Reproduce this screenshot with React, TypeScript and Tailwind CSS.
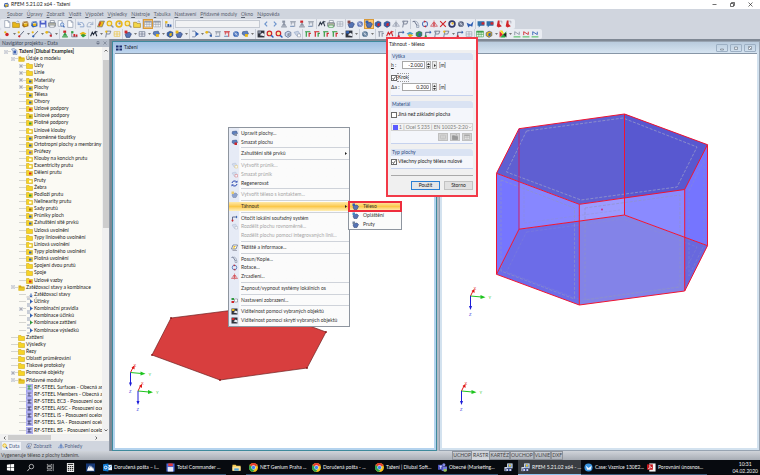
import React from 'react';
import clsx from 'clsx';

interface TreeItem {
  label: string;
  depth: number;
  icon?: string;
  mark?: string;
  sign?: string;
  bold?: boolean;
}

interface MenuEntry {
  label?: string;
  icon?: string;
  color?: string;
  disabled?: boolean;
  submenu?: boolean;
  active?: boolean;
}

interface Tool {
  g: string;
  a?: string;
  b?: string;
  on?: boolean;
}

const BLUE = '#2f5fb3';
const GOLD = '#e8b71a';
const RED = '#d0252b';
const GREEN = '#2f9a3e';
const GREY = '#8b93a3';

const MENUS = ['Soubor', 'Úpravy', 'Zobrazit', 'Vložit', 'Výpočet', 'Výsledky', 'Nástroje', 'Tabulka', 'Nastavení', 'Přídavné moduly', 'Okno', 'Nápověda'];

const TREE: TreeItem[] = [
  { label: 'Tažení [Dlubal Examples]', depth: 0, icon: 'model', sign: '-', bold: true },
  { label: 'Údaje o modelu', depth: 1, icon: 'open', sign: '-' },
  { label: 'Uzly', depth: 2, sign: '+' },
  { label: 'Linie', depth: 2, sign: '+' },
  { label: 'Materiály', depth: 2, sign: '+', mark: BLUE },
  { label: 'Plochy', depth: 2, sign: '+', mark: BLUE },
  { label: 'Tělesa', depth: 2, mark: BLUE },
  { label: 'Otvory', depth: 2, mark: BLUE },
  { label: 'Uzlové podpory', depth: 2, mark: RED },
  { label: 'Liniové podpory', depth: 2, mark: '#8a8a20' },
  { label: 'Plošné podpory', depth: 2, mark: GREEN },
  { label: 'Liniové klouby', depth: 2, mark: '#ffffff' },
  { label: 'Proměnné tloušťky', depth: 2, mark: BLUE },
  { label: 'Ortotropní plochy a membrány', depth: 2, mark: BLUE },
  { label: 'Průřezy', depth: 2, mark: '#6a62c8' },
  { label: 'Klouby na koncích prutu', depth: 2, mark: '#ffffff' },
  { label: 'Excentricity prutu', depth: 2, mark: '#ffffff' },
  { label: 'Dělení prutu', depth: 2, mark: RED },
  { label: 'Pruty', depth: 2, mark: '#ffffff' },
  { label: 'Žebra', depth: 2 },
  { label: 'Podloží prutu', depth: 2, mark: GREEN },
  { label: 'Nelinearity prutu', depth: 2, mark: '#ffffff' },
  { label: 'Sady prutů', depth: 2, mark: '#a06a10' },
  { label: 'Průniky ploch', depth: 2, mark: BLUE },
  { label: 'Zahuštění sítě prvků', depth: 2, mark: BLUE },
  { label: 'Uzlová uvolnění', depth: 2 },
  { label: 'Typy liniového uvolnění', depth: 2 },
  { label: 'Liniová uvolnění', depth: 2, mark: '#ffffff' },
  { label: 'Typy plošného uvolnění', depth: 2, mark: BLUE },
  { label: 'Plošná uvolnění', depth: 2, mark: BLUE },
  { label: 'Spojení dvou prutů', depth: 2 },
  { label: 'Spoje', depth: 2 },
  { label: 'Uzlové vazby', depth: 2, mark: RED },
  { label: 'Zatěžovací stavy a kombinace', depth: 1, icon: 'open', sign: '-' },
  { label: 'Zatěžovací stavy', depth: 2, icon: 'load' },
  { label: 'Účinky', depth: 2, icon: 'combo', mark: BLUE },
  { label: 'Kombinační pravidla', depth: 2, icon: 'combo', mark: BLUE, sign: '+' },
  { label: 'Kombinace účinků', depth: 2, icon: 'combo', mark: BLUE },
  { label: 'Kombinace zatížení', depth: 2, icon: 'combo', mark: GREEN },
  { label: 'Kombinace výsledků', depth: 2, icon: 'combo', mark: BLUE },
  { label: 'Zatížení', depth: 1 },
  { label: 'Výsledky', depth: 1 },
  { label: 'Řezy', depth: 1 },
  { label: 'Oblasti průměrování', depth: 1 },
  { label: 'Tiskové protokoly', depth: 1 },
  { label: 'Pomocné objekty', depth: 1, sign: '+' },
  { label: 'Přídavné moduly', depth: 1, icon: 'open', sign: '-' },
  { label: 'RF-STEEL Surfaces - Obecná ana', depth: 2, icon: 'module', mark: GREEN },
  { label: 'RF-STEEL Members - Obecná an', depth: 2, icon: 'module', mark: '#555588' },
  { label: 'RF-STEEL EC3 - Posouzení ocelov', depth: 2, icon: 'module', mark: '#333366' },
  { label: 'RF-STEEL AISC - Posouzení ocelo', depth: 2, icon: 'module', mark: '#333366' },
  { label: 'RF-STEEL IS - Posouzení ocelový', depth: 2, icon: 'module', mark: '#333366' },
  { label: 'RF-STEEL SIA - Posouzení ocelov', depth: 2, icon: 'module', mark: '#333366' },
  { label: 'RF-STEEL BS - Posouzení ocelový', depth: 2, icon: 'module', mark: '#333366' },
];

const CONTEXT_MENU: MenuEntry[] = [
  { label: 'Upravit plochy...', icon: 'surface', color: GREY },
  { label: 'Smazat plochu', icon: 'surface', color: RED },
  {},
  { label: 'Zahuštění sítě prvků', submenu: true },
  {},
  { label: 'Vytvořit průnik...', icon: 'cross', color: GOLD, disabled: true },
  { label: 'Smazat průnik', icon: 'cross', color: RED, disabled: true },
  { label: 'Regenerovat', icon: 'refresh', color: '#2b47b0' },
  {},
  { label: 'Vytvořit těleso s kontaktem...', icon: 'solid', color: GOLD, disabled: true },
  {},
  { label: 'Táhnout', submenu: true, active: true },
  {},
  { label: 'Otočit lokální souřadný systém', icon: 'axis', color: RED },
  { label: 'Rozdělit plochu rovnoměrně...', icon: 'cross', color: GREY, disabled: true },
  { label: 'Rozdělit plochu pomocí integrovaných linií...', disabled: true },
  {},
  { label: 'Těžiště a informace...', icon: 'info', color: GOLD },
  {},
  { label: 'Posun/Kopie...', icon: 'move', color: GREY },
  { label: 'Rotace...', icon: 'rotate', color: RED },
  { label: 'Zrcadlení...', icon: 'mirror', color: RED },
  {},
  { label: 'Zapnout/vypnout systémy lokálních os' },
  {},
  { label: 'Nastavení zobrazení...', icon: 'display', color: GREEN },
  {},
  { label: 'Viditelnost pomocí vybraných objektů', icon: 'visible', color: GOLD },
  { label: 'Viditelnost pomocí skrytí vybraných objektů', icon: 'visible', color: RED },
];

const SUBMENU = [
  { label: 'Těleso', color: BLUE },
  { label: 'Opláštění', color: '#3f86c4' },
  { label: 'Pruty', color: '#6d7f9c' },
];

const FILE_TOOLS: Tool[][] = [
  [{ g: 'page' }, { g: 'folder', a: GOLD }, { g: 'box', a: '#a36d1c', b: GOLD }, { g: 'box', a: BLUE, b: GOLD }, { g: 'save' }, { g: 'print' }, { g: 'pageZoom' }, { g: 'page' }],
  [{ g: 'undo' }, { g: 'redo' }],
  [{ g: 'parallel', a: GOLD, b: RED }, { g: 'zoom', a: GOLD }, { g: 'ring', a: GOLD, b: GREY }, { g: 'zoom', a: GOLD, b: GREY }, { g: 'folder', a: '#f2d64a' }],
  [{ g: 'table', on: true }, { g: 'table', a: GREY }],
  [{ g: 'nodes', a: GOLD, b: BLUE }],
];

const VIEW_TOOLS: Tool[][] = [
  [{ g: 'prev' }, { g: 'next' }, { g: 'support', a: GREY }, { g: 'beam', a: GREY }, { g: 'support', a: GREY, b: RED }, { g: 'beam', a: GREY }],
  [{ g: 'wave', a: '#333c4c' }, { g: 'print', a: GREEN }, { g: 'frame', a: GREY }],
  [{ g: 'solid', a: '#8a4a4a' }, { g: 'gear', a: '#5a6fb5' }, { g: 'solid', a: BLUE, on: true }, { g: 'cube', a: BLUE, b: RED }, { g: 'cube', a: BLUE, b: RED }, { g: 'mirror', a: GREY }, { g: 'flag', a: GREY }],
  [{ g: 'move' }, { g: 'rotate', a: RED }, { g: 'mirror', a: RED }, { g: 'xcross', a: RED }, { g: 'ring', a: '#333c6c', b: GOLD }, { g: 'gear', a: '#4a5470' }, { g: 'arrowUp', a: BLUE }],
  [{ g: 'chat', a: BLUE, b: RED }, { g: 'chat', a: BLUE, b: RED }, { g: 'pin', a: RED }, { g: 'pin', a: RED }],
];

const MODEL_TOOLS: Tool[][] = [
  [{ g: 'dot', a: RED }, { g: 'v' }, { g: 'line', a: GOLD, b: RED }, { g: 'v' }, { g: 'line', a: GOLD, b: BLUE }, { g: 'v' }, { g: 'arc', a: GOLD, b: RED }, { g: 'v' }],
  [{ g: 'support', a: GREEN, b: RED }, { g: 'nodes', a: GREEN, b: RED }, { g: 'layer', a: GREEN, b: GOLD }],
  [{ g: 'wave', a: '#222b3c' }, { g: 'v' }, { g: 'flag', a: GOLD }, { g: 'frame', a: GOLD }],
  [{ g: 'solid', a: RED }, { g: 'v' }, { g: 'frame', a: '#4a5470' }, { g: 'v' }, { g: 'surface', a: GOLD }, { g: 'v' }, { g: 'cube', a: BLUE, b: GOLD }, { g: 'solid', a: GOLD }, { g: 'v' }],
  [{ g: 'combo', a: BLUE }, { g: 'v' }, { g: 'arc', a: GOLD, b: BLUE }, { g: 'beam', a: GREY }, { g: 'beam', a: RED }, { g: 'gear', a: BLUE }, { g: 'surface', a: GOLD }, { g: 'v' }],
  [{ g: 'visible', a: GREY }, { g: 'zoom', a: RED, b: BLUE }, { g: 'zoom', a: RED, b: BLUE }, { g: 'cube', a: '#c9d6ee', b: GREY }, { g: 'cross', a: GREY }],
  [{ g: 'axes', a: GREEN, b: RED }, { g: 'axes', a: RED, b: GREEN }, { g: 'axes', a: GREEN, b: RED }, { g: 'axes', a: GREEN, b: RED }, { g: 'v' }, { g: 'visible', a: BLUE }, { g: 'v' }],
  [{ g: 'gear', a: '#4a6a8a' }, { g: 'v' }],
  [{ g: 'axes', a: GREY, b: GREY }, { g: 'wave', a: RED }],
  [{ g: 'axis', a: RED }, { g: 'layer', a: GOLD, b: '#4aa0c8' }, { g: 'cube', a: GREEN, b: BLUE }, { g: 'axis', a: GREEN }, { g: 'flag', a: GREY }, { g: 'flag', a: GOLD }, { g: 'v' }, { g: 'axis', a: RED }, { g: 'frame', a: GREY }],
  [{ g: 'table', a: GREEN }, { g: 'cube', a: GOLD, b: BLUE }, { g: 'v' }, { g: 'rainbow' }, { g: 'v' }, { g: 'ground', a: GREY }, { g: 'ground', a: RED }, { g: 'ground', a: BLUE }],
];

const STATUS = ['UCHOP', 'RASTR', 'KARTÉZ', 'OUCHOP', 'VLINIE', 'DXF'];

// All glyphs are drawn on a 14x14 grid
const shapes = (g: string, a: string, b: string): React.ReactNode => {
  switch (g) {
    case 'page':
      return <path d="M3 1h6l3 3v9H3z M9 1v3h3" fill="#fff" stroke="#7a869c" />;
    case 'pageZoom':
      return <><path d="M2 1h7v10H2z" fill="#fff" stroke="#7a869c" /><circle cx="9" cy="8" r="3" fill="#cfe0f2" stroke={BLUE} /><path d="M11 10l2 3" stroke={BLUE} strokeWidth="2" /></>;
    case 'folder':
      return <><path d="M1 4h5l1 2h6v7H1z" fill={a} stroke="#a07a10" /><path d="M8 3c2-2 4-1 4 1" fill="none" stroke="#4b6fae" /></>;
    case 'box':
      return <><path d="M3 3l8-1 2 3v6l-8 2-3-3z" fill={a} /><circle cx="8" cy="8" r="3" fill={b} /><path d="M3 3l2 3 8-1" fill="none" stroke="#fff" /></>;
    case 'save':
      return <><path d="M1 1h12v12H1z" fill="#4c5ec8" /><path d="M4 1h6v4H4z M3 8h8v5H3z" fill="#f0f3fb" /></>;
    case 'print':
      return <><path d="M4 1h7v4H4z" fill="#fff" stroke="#6a7488" /><path d="M1 5h12v6H1z" fill="#b9b6a6" stroke="#5a6478" /><path d="M3 9h8v4H3z" fill="#eee" stroke={a} /></>;
    case 'undo':
      return <path d="M2 3v5h5 M2 8c3-5 9-5 10 1v3H5" fill="none" stroke="#7f9cc8" strokeWidth="1.5" />;
    case 'redo':
      return <path d="M12 3v5H7 M12 8C9 3 3 3 2 9v3h7" fill="none" stroke="#9aabc6" strokeWidth="1.5" />;
    case 'parallel':
      return <><path d="M5 2h8l-4 10H1z" fill={a} stroke="#555" /><path d="M6 4l-2 6" stroke={b} strokeWidth="2" /></>;
    case 'zoom':
      return <><circle cx="6" cy="6" r="4" fill="#f6e9a8" stroke={a} strokeWidth="2" /><path d="M9 9l4 4" stroke={b} strokeWidth="2.5" /></>;
    case 'ring':
      return <><circle cx="7" cy="7" r="5" fill="#eef" stroke={a} strokeWidth="3" /><circle cx="8" cy="6" r="2" fill={b} /></>;
    case 'table':
      return <><path d="M1 2h12v10H1z" fill="#fff" stroke={a} /><path d="M1 5h12M1 8h12M5 2v10M9 2v10" stroke={a} /><path d="M1 2h12v2H1z" fill={a} /></>;
    case 'nodes':
      return <><path d="M2 2h4v4H2z" fill={a} /><path d="M6 7h3v5H6z M10 8h3v4h-3z" fill={b} /><path d="M3 6v6h10" fill="none" stroke="#556" /></>;
    case 'prev':
      return <path d="M9 3L5 7l4 4" fill="none" stroke="#6d94cc" strokeWidth="2" />;
    case 'next':
      return <path d="M5 3l4 4-4 4" fill="none" stroke="#6d94cc" strokeWidth="2" />;
    case 'support':
      return <><path d="M4 1h5v4H4z" fill={b} /><path d="M7 4l4 6H3z" fill={a} /><path d="M2 12h10" stroke={a} strokeWidth="2" /></>;
    case 'beam':
      return <><path d="M2 3h10M4 3v5M10 3v9M7 3v3" stroke={a} strokeWidth="1.5" /><path d="M2 11h7" stroke="#5577aa" strokeWidth="1.5" /></>;
    case 'wave':
      return <path d="M1 11l3-7 2 4 3-5 3 8M9 3h4" fill="none" stroke={a} strokeWidth="1.8" />;
    case 'frame':
      return <path d="M2 3h10v8H2z M2 7h10 M7 3v8" fill="#eef1f7" stroke={a} />;
    case 'solid':
      return <><path d="M4 5l6-1 3 3-3 6H4L2 8z" fill="#5573b4" stroke="#2b3e6e" /><path d="M1 1h5v5H1z" fill={a} /></>;
    case 'gear':
      return <><circle cx="7" cy="7" r="5" fill={a} /><path d="M3 7h8M7 3v8M4 4l6 6" stroke="#e6ecf7" /></>;
    case 'cube':
      return <><path d="M2 5l5-3 5 2v6l-5 3-5-3z" fill={a} stroke="#33466e" /><path d="M6 6l4-1v5l-4 1z" fill={b} /></>;
    case 'mirror':
      return <path d="M7 1v12 M6 4v7H1z M8 4v7h5z" fill="#dfe4ee" stroke={a} />;
    case 'flag':
      return <><path d="M3 13L5 2h7l-2 5H5" fill="none" stroke="#59647c" strokeWidth="1.3" /><circle cx="4" cy="3" r="2" fill={a} /></>;
    case 'move':
      return <><path d="M1 3l3-1 5 8" fill="none" stroke="#4a5470" strokeWidth="1.4" /><path d="M5 2c4 0 6 3 6 6M8 9h4v4H8z" fill="#dfe4ee" stroke="#7a869c" /></>;
    case 'rotate':
      return <><circle cx="7" cy="7" r="4.5" fill="none" stroke="#5577bb" strokeWidth="1.8" /><path d="M5 1l4 1-3 3z M9 13l-4-1 3-3z" fill={a} /></>;
    case 'xcross':
      return <path d="M2 2l10 10M12 2L2 12" stroke={a} strokeWidth="2" />;
    case 'arrowUp':
      return <path d="M1 5l7 3 5-6-2 10-4-2-3 3z" fill={a} />;
    case 'chat':
      return <><path d="M1 2h12v8H6l-3 3v-3H1z" fill="#2f6fa8" /><path d="M8 4h5v4H8z" fill={b} /></>;
    case 'pin':
      return <><path d="M5 1h3v6l4 4-6 2-3-2z" fill={a} /><path d="M9 2h3v4" fill="none" stroke="#889" /></>;
    case 'dot':
      return <><circle cx="7" cy="8" r="3" fill={a} /><circle cx="4" cy="4" r="2" fill={GOLD} /></>;
    case 'line':
      return <><path d="M3 12L12 2" stroke="#555f78" strokeWidth="1.6" /><circle cx="3" cy="4" r="2" fill={a} /><circle cx="4" cy="11" r="2" fill={b} /></>;
    case 'arc':
      return <><path d="M3 4c6-2 9 2 8 8" fill="none" stroke="#555f78" strokeWidth="1.6" /><circle cx="3" cy="4" r="2.4" fill={a} /><circle cx="10" cy="10" r="2" fill={b} /></>;
    case 'layer':
      return <><path d="M1 6l6-3 6 3-6 5z" fill={b} /><path d="M3 9l4-2 6 2-6 4z" fill={a} /></>;
    case 'surface':
      return <><path d="M3 3l8-1 2 5-7 3-4-3z" fill="#5b7fbe" stroke="#31497c" /><path d="M7 7h5v5H7z" fill={a} /></>;
    case 'cross':
      return <><path d="M2 4l7-2 3 5-5 4z" fill="#c9d3e4" stroke="#8ba0c4" /><path d="M8 7h5v5H8z" fill="#fff" stroke={a} /></>;
    case 'refresh':
      return <><path d="M2 6a5 5 0 0 1 9-2M12 8a5 5 0 0 1-9 2" fill="none" stroke={a} strokeWidth="2" /><path d="M8 5h5V1z M6 9H1v4z" fill={a} /></>;
    case 'axis':
      return <><path d="M3 13V4h8" fill="none" stroke="#44527a" strokeWidth="1.6" /><path d="M10 1l3 3-3 3z" fill={BLUE} /><circle cx="3" cy="11" r="2" fill={a} /></>;
    case 'info':
      return <><path d="M4 2h9l-3 8H1z" fill="#fff" stroke="#44506c" strokeWidth="1.2" /><path d="M5 5h4M4 8h4" stroke={a} strokeWidth="2" /><path d="M3 13h9" stroke="#667" /></>;
    case 'display':
      return <><path d="M1 2h5v4H1z" fill={a} /><path d="M1 8h5v4H1z" fill={RED} /><path d="M7 4h6v6H7z" fill="#fff" stroke="#667" /></>;
    case 'visible':
      return <><path d="M1 1h12v12H1z" fill="#30343e" /><path d="M2 2h5v4H2z" fill={a} /><path d="M5 9l4-4 4 2v4z" fill="#e8ebf2" /></>;
    case 'axes':
      return <><path d="M2 3h9M4 3v9" stroke={a} strokeWidth="2" /><path d="M8 6h4M9 6v6" stroke={b} strokeWidth="2" /></>;
    case 'rainbow':
      return <><path d="M1 2l6 6-6 5z" fill="#e8282c" /><path d="M1 1h5l3 6-2 1z" fill="#f5d91c" /><path d="M13 2L7 8l-5 5h9z" fill="#28a83c" /><path d="M8 8l5-3v8z" fill="#222" /></>;
    case 'ground':
      return <><path d="M1 11h12v2H1z" fill="#5cc36c" /><path d="M3 9V3l8 5V3" fill="none" stroke={a} strokeWidth="1.5" /></>;
    case 'combo':
      return <><path d="M2 2h5c3 0 3 10 0 10H2" fill="none" stroke="#5c7098" strokeWidth="1.3" /><path d="M8 3l6 4-6 4z" fill={a} /></>;
    case 'load':
      return <><path d="M1 12h12" stroke="#778" /><path d="M10 5v7M8 9l2 3 2-3" stroke={BLUE} strokeWidth="2" fill="none" /></>;
    case 'module':
      return <><path d="M0 0h14v14H0z" fill="#c4c4f6" stroke="#8c8ce8" strokeWidth="1.5" /><path d="M3 4h8M3 10h8M6 4v6" stroke={a} strokeWidth="2" /></>;
    case 'model':
      return <><path d="M1 2l5-1 6 4v8H4V7z" fill="#dfe7f4" stroke="#5673ab" /><path d="M5 5h5v6H5z" fill="#3b5fae" /></>;
    case 'open':
      return <><path d="M1 3h5l1 2h6v8H1z" fill="#d4a80c" /><path d="M3 7h11l-2 6H1z" fill="#e6c62a" /></>;
    default:
      return <><path d="M1 3h5l1 2h6v8H1z" fill="#f6d327" stroke="#caa008" /><path d="M6 7h5v4H6z" fill={a} /></>;
  }
};

const Glyph = ({ g, a = GREY, b = GREY, className = 'size-2' }: { g: string; a?: string; b?: string; className?: string }) => (
  <svg viewBox="0 0 14 14" className={clsx('shrink-0', className)} aria-hidden="true">{shapes(g, a, b)}</svg>
);

const ToolGroups = ({ groups }: { groups: Tool[][] }) => (
  <>
    {groups.map((group, i) => (
      <div key={i} className="flex h-full items-center gap-px border-r border-[#c9ced8] px-px last:border-r-0">
        {group.map((t, j) =>
          t.g === 'v' ? (
            <button key={j} aria-label="Další" className="flex w-1 justify-center">
              <svg viewBox="0 0 6 4" className="w-[3px]"><path d="M0 0h6L3 4z" fill="#777" /></svg>
            </button>
          ) : (
            <button key={j} aria-label={t.g} className={clsx('flex size-2 items-center justify-center', t.on && 'bg-[#ffc66b] outline outline-[#d99a3a]')}>
              <Glyph g={t.g} a={t.a} b={t.b} />
            </button>
          )
        )}
      </div>
    ))}
  </>
);

const TreeRow = ({ item }: { item: TreeItem }) => {
  const g = item.icon || 'folder-closed';
  return (
    <li className={clsx('flex min-h-0 flex-1 items-center whitespace-nowrap', item.depth === 0 && 'pl-[4px]', item.depth === 1 && 'pl-[11px]', item.depth === 2 && 'pl-[19px]')}>
      <span className="flex w-[7px] shrink-0 items-center">
        {item.sign && (
          <svg viewBox="0 0 8 8" className="size-1">
            <path d="M0.5 0.5h7v7h-7z" fill="#fff" stroke="#9aa3b4" />
            <path d={item.sign === '+' ? 'M2 4h4M4 2v4' : 'M2 4h4'} stroke="#445" />
          </svg>
        )}
        <span className="h-px flex-1 bg-[#d5d5d0]" />
      </span>
      <Glyph g={g} a={item.mark || '#f6d327'} className="size-[7px]" />
      <span className={clsx('pl-px', item.bold && 'pl-[2px] font-bold')}>{item.label}</span>
    </li>
  );
};

const Navigator = () => (
  <aside className="flex w-[110px] shrink-0 flex-col border-r border-[#8d96a3] bg-[#d0d5de]">
    <header className="flex h-2 items-center justify-between bg-[#b4bcc9] px-[2px] text-[#3c4656]">
      <span>Navigátor projektu - Data</span>
      <span className="flex gap-[3px] text-[#5d6778]">
        <button aria-label="Připnout">
          <svg viewBox="0 0 8 8" className="size-1"><path d="M2 1h4v4H2z M1 5h6M4 5v3" fill="none" stroke="currentColor" /></svg>
        </button>
        <button aria-label="Zavřít panel">
          <svg viewBox="0 0 8 8" className="size-1"><path d="M1 1l6 6M7 1L1 7" stroke="currentColor" /></svg>
        </button>
      </span>
    </header>
    <div className="flex min-h-0 flex-1 bg-[#fbfaf4]">
      <ul className="flex min-w-0 flex-1 flex-col overflow-hidden pt-px">
        {TREE.map((item, i) => <TreeRow key={i} item={item} />)}
      </ul>
      <div className="flex w-[7px] shrink-0 flex-col items-center bg-[#f0f0f0] py-[2px]">
        <svg viewBox="0 0 8 6" className="w-1"><path d="M1 5l3-3 3 3" fill="none" stroke="#333" strokeWidth="1.4" /></svg>
        <div className="mt-2 h-[168px] w-[6px] bg-[#cdcdcd]" />
        <svg viewBox="0 0 8 6" className="mt-auto w-1"><path d="M1 1l3 3 3-3" fill="none" stroke="#333" strokeWidth="1.4" /></svg>
      </div>
    </div>
    <div className="flex h-[7px] items-center gap-[2px] bg-[#f0f0f0] px-[3px]">
      <svg viewBox="0 0 6 8" className="h-1"><path d="M5 1L2 4l3 3" fill="none" stroke="#333" strokeWidth="1.4" /></svg>
      <div className="h-[5px] w-[43px] bg-[#cdcdcd]" />
      <svg viewBox="0 0 6 8" className="mr-2 ml-auto h-1"><path d="M1 1l3 3-3 3" fill="none" stroke="#333" strokeWidth="1.4" /></svg>
    </div>
    <nav className="flex h-[10px] items-center gap-[3px] pl-[2px] text-[#4f5f85]">
      <button className="flex h-2 items-center gap-px bg-[#eef1f6] pr-[2px]"><Glyph g="zoom" a={GOLD} b={BLUE} className="size-[6px]" />Data</button>
      <button className="flex items-center gap-px pl-[2px]"><Glyph g="info" a={BLUE} className="size-[6px]" />Zobrazit</button>
      <button className="flex items-center gap-px pl-[3px]"><Glyph g="mirror" a={BLUE} className="size-[6px]" />Pohledy</button>
    </nav>
  </aside>
);

const Axes = ({ x, y }: { x: number; y: number }) => (
  <g transform={`translate(${x} ${y})`} fontSize="4" fontFamily="Liberation Sans, sans-serif">
    <path d="M0 0L3 -6" stroke="#e01818" />
    <path d="M1 -5L4 -7V-3z" fill="#e01818" />
    <text x="3" y="-6" fill="#e01818">X</text>
    <path d="M0 0L11 1" stroke="#1fc41f" />
    <path d="M10 -1l5 2.3-5 1.6z" fill="#1fc41f" />
    <text x="18" y="3" fill="#1fc41f">Y</text>
    <path d="M0 0V12" stroke="#1c1cd8" />
    <path d="M-1.5 10h3L0 14z" fill="#1c1cd8" />
    <text x="-1.5" y="20" fill="#1c1cd8">Z</text>
  </g>
);

const BaseSurface = () => (
  <svg viewBox="115 54 319 394" className="size-full">
    <polygon points="171,318 258,307 326,332 307,368 220,380 152,355" fill="#d83e3e" stroke="#6e2020" strokeWidth="0.7" />
    {[[171, 318], [326, 332], [307, 368], [220, 380], [152, 355]].map(([x, y]) => (
      <circle key={x} cx={x} cy={y} r="0.9" fill="#8c1414" />
    ))}
    <Axes x={130.5} y={372.5} />
    <Axes x={138} y={391} />
  </svg>
);

const ExtrudedSolid = () => (
  <svg viewBox="442 54 315 394" className="size-full">
    <g>
      <polygon points="496.5,173.3 519,181.7 519,229.2 496.5,274.3" fill="#7676ff" />
      <polygon points="519,181.7 579.3,204.3 579.3,221.1 519,229.2" fill="#8787ff" />
      <polygon points="579.3,204.3 624.5,198 624.5,215 579.3,221.1" fill="#9c9cff" />
      <polygon points="624.5,198 684.7,189.5 684.7,237.3 624.5,215" fill="#8a8aff" />
      <polygon points="684.7,189.5 707.5,144.7 707.5,245.7 684.7,237.3" fill="#7575ff" />
      <polygon points="496.5,274.3 519,229.2 579.3,221.1 579.3,305" fill="#6c6ce8" />
      <polygon points="579.3,221.1 624.5,215 684.7,237.3 684.7,291 579.3,305" fill="#8383e8" />
      <polygon points="684.7,237.3 707.5,245.7 684.7,291" fill="#6868de" />
      <polygon points="519,128.7 624.5,114 707.5,144.7 684.7,189.5 579.3,204.3 496.5,173.3" fill="#5f5fd2" />
      <polygon points="624.5,114 707.5,144.7 684.7,189.5 624.5,198" fill="#5858d0" />
    </g>
    <g fill="none" stroke="#8f93c4" strokeWidth="0.7" strokeDasharray="3 1.5">
      <polygon points="526.5,131 623,118 697,147 677,187 581,200 506.5,172" stroke="#9da0c8" />
      <polygon points="501,180 574.5,208 574.5,299 501,271" />
      <polygon points="585,208 680,195 680,287 585,300" />
      <polygon points="689,191 704,160 704,245 689,276" strokeOpacity="0.6" />
      <polygon points="526.5,232 623,219 697,247 677,287 581,300 506.5,272" strokeOpacity="0.4" />
      <path d="M524 187V223L620 210" strokeOpacity="0.5" />
    </g>
    <g fill="none" stroke="#f01432">
      <polygon points="519,128.7 624.5,114 707.5,144.7 684.7,189.5 579.3,204.3 496.5,173.3" />
      <polygon points="519,229.2 624.5,215 707.5,245.7 684.7,291 579.3,305 496.5,274.3" />
      <path d="M519 128.7V229.2" stroke="#c81e6a" />
      <path d="M624.5 114V215M707.5 144.7V245.7M684.7 189.5V291M579.3 204.3V305M496.5 173.3V274.3" />
    </g>
    <circle cx="602" cy="209.5" r="0.9" fill="#d0207a" />
    <Axes x={470.5} y={296} />
    <Axes x={461.5} y={391} />
  </svg>
);

const WorkWindow = ({ title, active, children }: { title?: string; active?: boolean; children: React.ReactNode }) => (
  <section className={clsx('flex min-h-0 min-w-0 flex-col border px-[2px] pb-[2px]', active ? 'border-[#3f8a9c] bg-[#b4d3ee]' : 'border-[#98a4b2] bg-[#d3e2ef]')}>
    <header className={clsx('-mx-[2px] flex h-[11px] shrink-0 items-center gap-[2px] px-[3px] bg-linear-to-b text-[#1d2735]', active ? 'from-[#9fbfe2] to-[#bfd6ee]' : 'from-[#b9cbdd] to-[#d6e4f1]')}>
      {title ? (
        <>
          <svg viewBox="0 0 14 14" className="size-[6px]"><path d="M0 1h6v5H0z M8 1h6v5H8z M0 8h6v5H0z M8 8h6v5H8z" fill="#1f2f70" /></svg>
          <span>{title}</span>
        </>
      ) : (
        <span className="ml-auto flex gap-[2px]">
          {['M3 8h6v2H3z', 'M3 4h6v5H3z M5 6h2', 'M3 3h6v6H3z M4 4l4 4'].map((d, i) => (
            <button key={i} aria-label={['Minimalizovat', 'Obnovit', 'Zavřít'][i]} className="flex h-2 w-3 items-center justify-center rounded-[1px] border border-[#9db0c4]">
              <svg viewBox="0 0 12 12" className="size-[6px]"><path d={d} fill="#fff" stroke="#6a7888" strokeWidth="1.3" /></svg>
            </button>
          ))}
        </span>
      )}
    </header>
    <div className="min-h-0 flex-1 border-t border-[#8796a6] bg-white">{children}</div>
  </section>
);

const CheckBox = ({ id, label, checked, focus }: { id: string; label: string; checked?: boolean; focus?: boolean }) => (
  <div className="flex h-[7px] items-center gap-px">
    <span className="relative flex size-[6px] shrink-0">
      <input id={id} type="checkbox" defaultChecked={checked} className="peer size-full appearance-none border border-[#6a6a6a] bg-white" />
      <svg viewBox="0 0 12 12" className="pointer-events-none absolute inset-0 hidden size-full peer-checked:block"><path d="M3 6l2 3 4-6" fill="none" stroke="#222" strokeWidth="1.4" /></svg>
    </span>
    <label htmlFor={id} className={clsx('whitespace-nowrap', focus && 'outline-1 outline-dotted outline-[#999]')}>{label}</label>
  </div>
);

const Spin = () => (
  <span className="flex h-2 w-[5px] flex-col items-center justify-center gap-px border border-[#b4b4b4] bg-[#ececec]">
    <svg viewBox="0 0 6 4" className="w-[3px]"><path d="M0 4h6L3 0z" fill="#333" /></svg>
    <svg viewBox="0 0 6 4" className="w-[3px]"><path d="M0 0h6L3 4z" fill="#333" /></svg>
  </span>
);

const Group = ({ title, className, children }: { title: string; className?: string; children: React.ReactNode }) => (
  <fieldset className={clsx('flex min-w-0 flex-col border-b border-[#c6d2ee] bg-[#f4f6fb]', className)}>
    <div className="h-[7px] rounded-tr-[3px] bg-[#dae3f3] px-px text-[#2c4a7c]">{title}</div>
    {children}
  </fieldset>
);

const ExtrudeDialog = () => (
  <div role="dialog" className="absolute top-[37px] left-[386px] flex w-[92px] flex-col border-2 border-[#f23a48] bg-[#f0f0f0] text-[#222]">
    <div className="h-[11px] bg-white px-px leading-[11px]">Táhnout - těleso</div>
    <form className="flex flex-col gap-[5px] px-[3px] pt-[3px] pb-[5px]" onSubmit={(e) => e.preventDefault()}>
      <Group title="Výška" className="h-[43px]">
        <div className="mt-px flex h-2 items-center gap-px">
          <label htmlFor="height" className="w-[10px]"><u>h</u> :</label>
          <input id="height" defaultValue="-2.000" className="h-2 w-[23px] border border-[#a8a8a8] bg-white px-px text-right" />
          <Spin />
          <button type="button" aria-label="Vybrat výšku" className="flex h-2 w-[5px] items-center justify-center border border-[#b4b4b4] bg-[#ececec]">
            <svg viewBox="0 0 4 6" className="h-[3px]"><path d="M0 0l4 3-4 3z" fill="#333" /></svg>
          </button>
          <span className="pl-px">[m]</span>
        </div>
        <div className="mt-[5px]"><CheckBox id="step" label="Krok" checked focus /></div>
        <div className="mt-[2px] flex h-2 items-center gap-px">
          <label htmlFor="delta" className="w-[10px]">Δa :</label>
          <input id="delta" defaultValue="0.200" className="h-2 w-[29px] border border-[#a8a8a8] bg-white px-px text-right" />
          <Spin />
          <span className="pl-px">[m]</span>
        </div>
      </Group>
      <Group title="Materiál" className="h-[43px]">
        <div className="mt-[3px]"><CheckBox id="other" label="Jiná než základní plocha" /></div>
        <div className="mt-[5px] flex h-2 items-center border border-[#d2d2d2] bg-[#f3f3f3] pl-px text-[#7c7c7c]">
          <span className="size-[5px] shrink-0 bg-[#5a5aff]" />
          <select aria-label="Materiál" disabled className="min-w-0 flex-1 appearance-none overflow-hidden bg-transparent pl-px">
            <option>1 | Ocel S 235 | EN 10025-2:200</option>
          </select>
          <svg viewBox="0 0 8 6" className="w-1 shrink-0"><path d="M1 1l3 3 3-3" fill="none" stroke="#999" /></svg>
        </div>
        <div className="mt-[2px] flex justify-end gap-[2px] pr-px">
          {['frame', 'folder', 'table'].map((g) => (
            <button key={g} type="button" aria-label={g} className="flex h-2 w-[10px] items-center justify-center border border-[#c0c0c0] bg-[#d4d4d4] grayscale">
              <Glyph g={g} a="#999999" className="size-[6px]" />
            </button>
          ))}
        </div>
      </Group>
      <Group title="Typ plochy" className="h-[20px]">
        <div className="mt-[2px]"><CheckBox id="null" label="Všechny plochy tělesa nulové" checked /></div>
      </Group>
      <div className="mt-px border-t border-[#a9a9a9]" />
      <div className="flex justify-end gap-1">
        <button className="h-[9px] w-[29px] border border-[#2a7fd4] bg-[#e4e6e8]">Použít</button>
        <button type="button" className="h-[9px] w-[29px] border border-[#c2c2c2] bg-[#e1e1e1]">Storno</button>
      </div>
    </form>
  </div>
);

const ContextMenu = () => (
  <div role="menu" className="absolute top-[127px] left-[228px] flex h-[200px] w-[122px] flex-col border border-[#8e959f] bg-[#fbfbfb] bg-linear-to-r from-[#e6ebf6] from-8% to-[#fbfbfb] to-9% py-px text-[#333]">
    {CONTEXT_MENU.map((m, i) =>
      m.label ? (
        <button
          key={i}
          role="menuitem"
          disabled={m.disabled}
          className={clsx('flex min-h-0 flex-1 items-center gap-[3px] px-[2px] text-left', m.disabled && 'text-[#a5a5a5]', m.active && 'bg-linear-to-b from-[#ffe9a6] via-[#fbc848] to-[#fff0b8]')}
        >
          <span className={clsx('w-[7px] shrink-0', m.disabled && 'opacity-60')}>
            {m.icon && <Glyph g={m.icon} a={m.color} b={m.color} className="size-[7px]" />}
          </span>
          <span className="flex-1 whitespace-nowrap">{m.label}</span>
          {m.submenu && <svg viewBox="0 0 4 6" className="h-[3px]"><path d="M0 0l4 3-4 3z" fill="#222" /></svg>}
        </button>
      ) : (
        <hr key={i} className="my-px ml-3 h-px shrink-0 border-t border-[#cfd3da]" />
      )
    )}
  </div>
);

const ExtrudeSubmenu = () => (
  <div role="menu" className="absolute top-[201px] left-[348px] w-[54px] border border-[#8e959f] bg-[#fbfbfb] text-[#333]">
    {SUBMENU.map((s, i) => (
      <button
        key={s.label}
        role="menuitem"
        className={clsx('flex h-[9px] w-full items-center gap-[4px] pl-[3px] text-left', i === 0 && 'relative bg-linear-to-b from-[#ffe9a6] via-[#fbc848] to-[#fff0b8] outline-2 -outline-offset-1 outline-[#ee2c3c]')}
      >
        <Glyph g="solid" a={s.color} className="size-[7px]" />
        <span>{s.label}</span>
      </button>
    ))}
  </div>
);

const Chrome = () => (
  <svg viewBox="0 0 20 20" className="size-[9px] shrink-0">
    <circle cx="10" cy="10" r="10" fill="#f6c21c" />
    <path d="M10 10L1.3 5A10 10 0 0 1 18.7 5z" fill="#e23b30" />
    <path d="M1.3 5A10 10 0 0 0 9 20l4-7.5-3-2.5z" fill="#2ca14c" />
    <circle cx="10" cy="10" r="4.8" fill="#fff" />
    <circle cx="10" cy="10" r="3.8" fill="#4285f4" />
  </svg>
);

const RfemIcon = () => (
  <svg viewBox="0 0 20 20" className="size-[9px] shrink-0">
    <path d="M7 1h12v11H7z" fill="#e8eef8" />
    <path d="M9 3h8v7H9z" fill="#4d7fc9" />
    <circle cx="13" cy="6" r="2.5" fill="#f3c623" />
    <path d="M1 9h6v9H1z" fill="#dfe4ee" />
    <path d="M3 12h14v6H3z" fill="#2c3f88" />
    <path d="M5 14h4v3H5z M12 14h4v3h-4z" fill="#fff" />
  </svg>
);

const Task = ({ icon, label, active }: { icon: React.ReactNode; label: string; active?: boolean }) => (
  <button className={clsx('flex w-[63px] shrink-0 items-center gap-[2px] border-b pl-[3px] text-left whitespace-nowrap', active ? 'border-[#8ec3ee] bg-[#3a3d42]' : 'border-[#3a5a78]')}>
    {icon}
    <span>{label}</span>
  </button>
);

const Pinned = ({ label, children }: { label: string; children: React.ReactNode }) => (
  <button aria-label={label} className="flex w-5 shrink-0 items-center justify-center">
    <svg viewBox="0 0 20 20" className="size-[9px]">{children}</svg>
  </button>
);

const Taskbar = () => (
  <footer className="flex h-[15px] shrink-0 bg-[#070a0f] text-[#f0f0f0]">
    <Pinned label="Start"><path d="M2 4l7-1v6.500H2z M10 3l8-1v7.500h-8z M2 10.500h7V17l-7-1z M10 10.500h8V18l-8-1z" fill="#fff" /></Pinned>
    <Pinned label="Hledat"><circle cx="12" cy="8" r="5" fill="none" stroke="#e8e8e8" strokeWidth="1.6" /><path d="M8 12l-5 6" stroke="#e8e8e8" strokeWidth="1.8" /></Pinned>
    <Pinned label="Zobrazení úloh"><path d="M3 2v3h9V2 M3 8h9v5H3z M3 18v-2h9v2 M16 2v16" fill="none" stroke="#dcdcdc" strokeWidth="1.500" /></Pinned>
    <Pinned label="Kalkulačka"><path d="M2 0h16v20H2z" fill="#f4f4f4" /><path d="M4 3h12M4 8h3M8.500 8h3M13 8h3M4 12h3M8.500 12h3M13 12h3M4 16h3M8.500 16h3M13 16h3" stroke="#111" strokeWidth="2.200" /></Pinned>
    <Pinned label="Dlubal"><path d="M0 1h20v18H0z" fill="#173a78" /><path d="M2 17c2-4 3-9 6-12v8l3-8 3 8 1-5c2 4 2 6 3 9z" fill="#fff" /></Pinned>
    <Task label="Doručená pošta – i..." icon={<svg viewBox="0 0 20 20" className="size-[9px] shrink-0"><path d="M9 4h11v12H9z" fill="#e6f2fc" /><path d="M9 5l6 5 5-5" fill="none" stroke="#1273c4" strokeWidth="1.500" /><path d="M0 3l12-2v18L0 17z" fill="#0f78d0" /><circle cx="6" cy="10" r="3" fill="none" stroke="#fff" strokeWidth="2" /></svg>} />
    <Task label="Total Commander ..." icon={<svg viewBox="0 0 20 20" className="size-[9px] shrink-0"><path d="M1 1h18v18H1z" fill="#4a68d4" /><path d="M5 1h10v6H5z" fill="#e33b3b" /><path d="M4 9h12v10H4z" fill="#e8ecf8" /></svg>} />
    <Pinned label="Průzkumník"><path d="M1 4h7l2 2h9v11H1z" fill="#f3c951" /><path d="M1 8h18v9H1z" fill="#fbe29a" /><path d="M5 12h10v5H5z" fill="#53a5dc" /></Pinned>
    <Task label="NET Genium Praha ..." icon={<Chrome />} />
    <Task label="Doručená pošta - ..." icon={<Chrome />} />
    <Task label="Tažení | Dlubal Soft..." icon={<Chrome />} />
    <Task label="Obecné (Marketing..." icon={<svg viewBox="0 0 20 20" className="size-[9px] shrink-0"><circle cx="13" cy="4" r="3.500" fill="#8288e0" /><path d="M8 8h12v7l-5 4-7-2z" fill="#7478dc" /><path d="M0 4h11v11H0z" fill="#4b53bc" /><path d="M3 7h6M6 7v6" stroke="#fff" strokeWidth="1.600" /><circle cx="16" cy="16" r="3.500" fill="#92c353" /></svg>} />
    <button aria-label="RFEM" className="flex w-5 shrink-0 items-center justify-center"><RfemIcon /></button>
    <Task active label="RFEM 5.21.02 x64 - ..." icon={<RfemIcon />} />
    <Task label="Case: Vaznice 130E2..." icon={<svg viewBox="0 0 20 20" className="size-[9px] shrink-0"><circle cx="10" cy="10" r="9" fill="#3a94e0" /><path d="M4 6l6 5 7-5-2 9H7z" fill="#f2f8fd" /></svg>} />
    <Task label="Porovnání únosnos..." icon={<svg viewBox="0 0 20 20" className="size-[9px] shrink-0"><path d="M5 1h14v18H5z" fill="#f4f4f4" /><path d="M0 3h13v12H0z" fill="#c4161c" /><path d="M3 13c3-3 4-6 3-8 1 4 3 5 5 5-3 0-5 1-8 3z" fill="none" stroke="#fff" strokeWidth="1.300" /></svg>} />
    <div className="ml-auto flex flex-col items-center justify-center px-[2px]">
      <time>10:31</time>
      <time>04.02.2020</time>
    </div>
  </footer>
);

export default function App() {
  return (
    <div className="relative flex h-screen flex-col overflow-hidden bg-[#d0d5de] font-['Lato',sans-serif] text-[5px] leading-[7px] text-[#222]">
      <header className="flex h-[9px] shrink-0 items-center gap-[2px] bg-white px-[3px]">
        <Glyph g="box" a="#3f62ac" b={GOLD} className="size-[6px]" />
        <h1>RFEM 5.21.02 x64 - Tažení</h1>
        <div className="ml-auto flex gap-[13px] pr-1">
          {['M1 5h8', 'M1 3h6v6H1z M3 3V1h6v6H7', 'M1 1l8 8M9 1L1 9'].map((d, i) => (
            <button key={d} aria-label={['Minimalizovat', 'Obnovit dolů', 'Zavřít'][i]}>
              <svg viewBox="0 0 10 10" className="size-[5px]"><path d={d} fill="none" stroke="#222" strokeWidth="1.300" /></svg>
            </button>
          ))}
        </div>
      </header>

      <nav className="flex h-[10px] shrink-0 items-center gap-1 px-[7px] text-[#5a6270]">
        {MENUS.map((m) => (
          <button key={m}><span className="underline">{m[0]}</span>{m.slice(1)}</button>
        ))}
      </nav>

      <div className="flex h-[10px] w-fit shrink-0 items-center rounded-[2px] bg-[#e9ecf2] px-[2px]">
        <ToolGroups groups={FILE_TOOLS} />
        <select aria-label="Zatěžovací stav" className="mx-px h-2 w-[85px] appearance-none border border-[#c4c9d2] bg-[#f1f2f4]" />
        <ToolGroups groups={VIEW_TOOLS} />
      </div>
      <div className="flex h-[10px] w-fit shrink-0 items-center rounded-[2px] bg-[#e9ecf2] px-[2px]">
        <ToolGroups groups={MODEL_TOOLS} />
      </div>

      <main className="flex min-h-0 flex-1">
        <Navigator />
        <div className="grid min-w-0 flex-1 grid-cols-[325fr_321fr] grid-rows-[minmax(0,1fr)] gap-[2px] border-t-2 border-l-2 border-[#7f8894] bg-[#b3bac5]">
          <WorkWindow title="Tažení" active><BaseSurface /></WorkWindow>
          <WorkWindow><ExtrudedSolid /></WorkWindow>
        </div>
      </main>

      <div className="flex h-[9px] shrink-0 items-center bg-linear-to-b from-[#d0d4da] to-[#a8adb5] pl-px text-[#444]">
        <span className="flex-1">Vygeneruje těleso z plochy tažením.</span>
        <div className="mr-[197px] flex">
          {STATUS.map((s) => (
            <span key={s} className={clsx('border', s === 'RASTR' ? 'border-transparent bg-[#cfd3d9]' : 'border-[#8e939b]')}>{s}</span>
          ))}
        </div>
      </div>

      <Taskbar />

      <ContextMenu />
      <ExtrudeSubmenu />
      <ExtrudeDialog />
    </div>
  );
}
